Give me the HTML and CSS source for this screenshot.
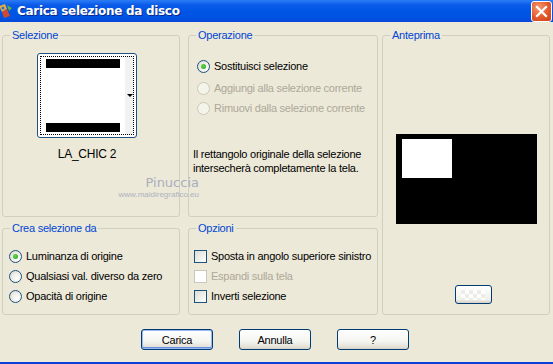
FILE: index.html
```html
<!DOCTYPE html>
<html lang="it">
<head>
  <meta charset="UTF-8" />
  <title>Carica selezione da disco</title>
  <link rel="stylesheet" href="styles.css">
</head>
<body>
  <div class="window">
    <div class="titlebar">
      <svg class="app-icon" width="16" height="16" viewBox="0 0 16 16">
        <path d="M1 3 L7 1 L9 6 L4 9 Z" fill="#e8b040"/>
        <path d="M4 9 L9 6 L12 13 L6 15 Z" fill="#d04a30"/>
        <circle cx="5" cy="5" r="1.5" fill="#3070d0"/>
        <path d="M9 2 L14 5 L11 8 Z" fill="#60b040"/>
      </svg>
      <span class="title">Carica selezione da disco</span>
      <div class="close-btn">
        <svg width="13" height="13" viewBox="0 0 13 13">
          <path d="M2 2 L11 11 M11 2 L2 11" stroke="#fff" stroke-width="2.2" stroke-linecap="square"/>
        </svg>
      </div>
    </div>

    <div class="client">
      <div class="groups">
        <div class="group group-sel">
          <span class="legend">Selezione</span>
          <div class="thumb">
            <div class="thumb-inner">
              <div class="bar"></div>
              <div class="bar"></div>
            </div>
            <span class="thumb-arrow"></span>
          </div>
          <div class="thumb-name">LA_CHIC 2</div>
        </div>

        <div class="group group-op">
          <span class="legend">Operazione</span>
          <label class="opt op-first"><span class="radio checked"></span>Sostituisci selezione</label>
          <label class="opt op-second disabled"><span class="radio"></span>Aggiungi alla selezione corrente</label>
          <label class="opt disabled"><span class="radio"></span>Rimuovi dalla selezione corrente</label>
          <p class="note">Il rettangolo originale della selezione intersecherà completamente la tela.</p>
        </div>

        <div class="group group-preview">
          <span class="legend">Anteprima</span>
          <div class="preview">
            <div class="preview-sel"></div>
          </div>
          <button class="small-btn"><span class="checker"></span></button>
        </div>

        <div class="group group-src">
          <span class="legend">Crea selezione da</span>
          <label class="opt"><span class="radio checked"></span>Luminanza di origine</label>
          <label class="opt"><span class="radio"></span>Qualsiasi val. diverso da zero</label>
          <label class="opt"><span class="radio"></span>Opacità di origine</label>
        </div>

        <div class="group group-opts">
          <span class="legend">Opzioni</span>
          <label class="opt"><span class="check"></span>Sposta in angolo superiore sinistro</label>
          <label class="opt disabled"><span class="check"></span>Espandi sulla tela</label>
          <label class="opt"><span class="check"></span>Inverti selezione</label>
        </div>
      </div>

      <div class="watermark">
        <span class="wm-name">Pinuccia</span>
        <span class="wm-url">www.maidiregrafico.eu</span>
      </div>

      <div class="buttons">
        <button class="btn btn-default">Carica</button>
        <button class="btn">Annulla</button>
        <button class="btn">?</button>
      </div>
    </div>
  </div>
</body>
</html>
```

FILE: styles.css
```css
body {
  margin: 0;
  background: #ece9d8;
  font-family: "Liberation Sans", Arial, sans-serif;
  font-size: 11px;
  letter-spacing: -0.25px;
  color: #000;
}

.window {
  width: 553px;
  height: 364px;
  display: flex;
  flex-direction: column;
  background: #ece9d8;
  border-bottom: 2px solid #0b3fd8;
  box-sizing: border-box;
  overflow: hidden;
}

.titlebar {
  height: 22px;
  display: flex;
  align-items: center;
  background: linear-gradient(#2a7cf6 0, #1f6ff0 2px, #0a5ae8 5px, #0055e5 50%, #0053e2 80%, #0a48d8 100%);
  position: relative;
}

.app-icon {
  margin-left: -2px;
  margin-right: 3px;
}

.title {
  color: #fff;
  font-family: "DejaVu Sans", sans-serif;
  font-weight: bold;
  font-size: 12px;
  letter-spacing: -0.3px;
  text-shadow: 1px 1px 0 #0a2a8a;
}

.close-btn {
  margin-left: auto;
  margin-right: 1px;
  width: 21px;
  height: 21px;
  box-sizing: border-box;
  border: 1px solid #fff;
  border-radius: 3px;
  background: radial-gradient(circle at 35% 30%, #f29a70 0, #e4572c 55%, #c8401a 100%);
  display: flex;
  align-items: center;
  justify-content: center;
}

.client {
  flex: 1;
  position: relative;
  padding: 13px 0 0 2px;
}

.groups {
  display: grid;
  grid-template-columns: 178px 190px 168px;
  grid-template-rows: 182px 87px;
  column-gap: 8px;
  row-gap: 11px;
}

.group {
  position: relative;
  border: 1px solid #d0d0bf;
  border-radius: 3px;
  box-sizing: border-box;
}

.group-preview {
  grid-column: 3;
  grid-row: 1 / span 2;
  margin-left: -4px;
  width: 168px;
  display: flex;
  flex-direction: column;
  align-items: center;
}

.legend {
  position: absolute;
  top: -8px;
  left: 7px;
  padding: 0 2px;
  background: #ece9d8;
  color: #0046d5;
  line-height: 14px;
}

/* Selezione */

.group-sel {
  display: flex;
  flex-direction: column;
  padding: 17px 0 0 34px;
}

.thumb {
  position: relative;
  width: 100px;
  height: 85px;
  box-sizing: border-box;
  border: 1px solid #1c5180;
  border-radius: 3px;
  background: #fff;
  padding: 2px;
}

.thumb-inner {
  height: 100%;
  border: 1px dotted #000;
  box-sizing: border-box;
  padding: 2px 13px 2px 5px;
  display: flex;
  flex-direction: column;
  justify-content: space-between;
  background: linear-gradient(to right, #fff 0, #fff 84px, #f2f2f2 84px);
}

.bar {
  height: 9px;
  background: #000;
}

.thumb-arrow {
  position: absolute;
  right: 3px;
  top: 40px;
  border-left: 3px solid transparent;
  border-right: 3px solid transparent;
  border-top: 3px solid #000;
}

.thumb-name {
  width: 100px;
  text-align: center;
  margin-top: 9px;
  font-size: 12px;
}

/* radio + checkbox */

.opt {
  display: flex;
  align-items: center;
  height: 20px;
  white-space: nowrap;
}

.opt.disabled {
  color: #aca899;
}

.radio {
  width: 13px;
  height: 13px;
  box-sizing: border-box;
  border: 1px solid #1c5180;
  border-radius: 50%;
  background: radial-gradient(circle at 65% 65%, #fff 0, #eeede5 50%, #d6d3c6 100%);
  margin-right: 4px;
  display: flex;
  align-items: center;
  justify-content: center;
}

.radio.checked::after {
  content: "";
  width: 5px;
  height: 5px;
  border-radius: 50%;
  background: radial-gradient(circle at 40% 40%, #62d84c, #21a121);
}

.disabled .radio {
  border-color: #cac8bb;
  background: #f5f4ea;
}

.check {
  width: 13px;
  height: 13px;
  box-sizing: border-box;
  border: 1px solid #1c5180;
  background: linear-gradient(135deg, #dcdcd6 0, #f0f0ea 55%, #fff 100%);
  margin-right: 4px;
}

.disabled .check {
  border-color: #cac8bb;
  background: #fff;
}

.group-op {
  padding: 19px 0 0 8px;
}

.group-op .op-first {
  height: 22px;
  margin-bottom: 1px;
}

.note {
  margin: 29px 0 0 -4px;
  line-height: 14px;
  width: 180px;
}

.group-src {
  padding: 17px 0 0 6px;
}

.group-opts {
  padding: 17px 0 0 5px;
}

/* Anteprima */

.preview {
  margin-top: 98px;
  width: 141px;
  height: 90px;
  background: #000;
  padding: 5px 0 0 6px;
  box-sizing: border-box;
}

.preview-sel {
  width: 50px;
  height: 39px;
  background: #fff;
}

.small-btn {
  margin-top: auto;
  margin-bottom: 10px;
  margin-left: 14px;
  width: 37px;
  height: 19px;
  border: 1px solid #003c74;
  border-radius: 3px;
  background: linear-gradient(#fff, #f0f0ea 80%, #d6d0c5);
  padding: 0;
  display: flex;
  align-items: center;
  justify-content: center;
}

.checker {
  width: 24px;
  height: 10px;
  background: repeating-conic-gradient(#fff 0 25%, #ecebe6 0 50%) 0 0 / 8px 8px;
  opacity: 0.9;
}

/* watermark */

.watermark {
  position: absolute;
  left: 121px;
  top: 153px;
  display: flex;
  flex-direction: column;
  align-items: flex-end;
  width: 78px;
  color: #9fa3b8;
  opacity: 0.85;
  letter-spacing: 0;
  pointer-events: none;
}

.wm-name {
  font-family: "DejaVu Sans", sans-serif;
  font-size: 13px;
  line-height: 15px;
}

.wm-url {
  font-size: 8px;
  line-height: 10px;
  color: #a5a9bb;
}

/* bottom buttons */

.buttons {
  display: flex;
  justify-content: center;
  gap: 26px;
  margin-top: 14px;
  padding-right: 5px;
}

.btn {
  width: 72px;
  height: 21px;
  border: 1px solid #003c74;
  border-radius: 3px;
  background: linear-gradient(#fff, #f4f4f0 60%, #e3e0d6 90%, #d6d0c5);
  font-family: "Liberation Sans", Arial, sans-serif;
  font-size: 11px;
  letter-spacing: -0.25px;
  color: #000;
  padding: 0;
}

.btn-default {
  box-shadow: inset 0 0 0 1px #97b8f0, inset 0 -1px 0 1px #6a8fe0;
}
```
